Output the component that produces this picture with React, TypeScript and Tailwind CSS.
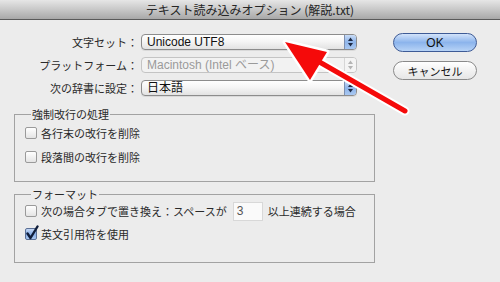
const jp = "font-['Noto_Sans_CJK_JP','Noto_Sans',sans-serif]";
const latin = "font-['Liberation_Sans','Noto_Sans_CJK_JP',sans-serif]";

function Stepper({ active }: { active: boolean }) {
  const c = active ? "#1d2a44" : "#b4b4b4";
  return (
    <svg width="7" height="10" viewBox="0 0 7 10">
      <path d="M3.5 0.5 L6 4 L1 4 Z" fill={c} />
      <path d="M3.5 9.5 L6 6 L1 6 Z" fill={c} />
    </svg>
  );
}

function Popup({ label, value, disabled = false }: { label: string; value: string; disabled?: boolean }) {
  return (
    <div className="flex h-[23px] items-center">
      <div className={`w-[138px] text-right text-[11px] leading-[14px] text-[#2a2a2a] ${jp}`}>{label}</div>
      <div
        className={`ml-[3px] flex h-[16px] w-[216px] items-stretch overflow-hidden rounded-[4px] border ${
          disabled ? "border-[#c4c4c4] bg-[#f2f2f2]" : "border-[#8c8c8c] bg-gradient-to-b from-[#ffffff] via-[#f4f4f4] to-[#e2e2e2] shadow-[0_1px_0_rgba(0,0,0,0.08)]"
        }`}
      >
        <div
          className={`flex flex-1 items-center pl-[5px] text-[12px] leading-[14px] ${latin} ${
            disabled ? "text-[#9a9a9a]" : "text-[#111]"
          }`}
        >
          {value}
        </div>
        <div
          className={`flex w-[12px] items-center justify-center border-l ${
            disabled ? "border-[#d6d6d6] bg-[#f4f4f4]" : "border-[#7d8fb0] bg-gradient-to-b from-[#c9dcf6] via-[#8fb5ea] to-[#a9c8f2]"
          }`}
        >
          <Stepper active={!disabled} />
        </div>
      </div>
    </div>
  );
}

function Checkbox({ checked = false }: { checked?: boolean }) {
  return (
    <div className="relative h-[12px] w-[12px] shrink-0">
      <div
        className={`h-[12px] w-[12px] rounded-[2px] border ${
          checked
            ? "border-[#5a6f95] bg-gradient-to-b from-[#c6d9f5] via-[#88aee6] to-[#a8c6f0]"
            : "border-[#9a9a9a] bg-gradient-to-b from-[#ffffff] to-[#e4e4e4]"
        }`}
      />
      {checked && (
        <svg className="absolute left-[1px] top-[-3px]" width="13" height="15" viewBox="0 0 13 15">
          <path d="M1.5 8.5 L4.5 13 L11.5 1.5" fill="none" stroke="#0f1d3a" strokeWidth="2.4" strokeLinecap="round" strokeLinejoin="round" />
        </svg>
      )}
    </div>
  );
}

function Row({ text, checked = false }: { text: string; checked?: boolean }) {
  return (
    <div className="flex h-[14px] items-center">
      <Checkbox checked={checked} />
      <span className={`ml-[4px] text-[11px] leading-[14px] text-[#2a2a2a] ${jp}`}>{text}</span>
    </div>
  );
}

export default function App() {
  return (
    <div className="relative h-[282px] w-[500px] overflow-hidden bg-[#ececec]">
      <div
        className={`flex h-[20px] items-center justify-center border-b border-[#5a5a5a] bg-gradient-to-b from-[#e6e6e6] via-[#c8c8c8] to-[#a8a8a8] text-[12px] leading-[14px] text-[#262626] ${jp}`}
      >
        テキスト読み込みオプション (解説.txt)
      </div>

      <div className="flex pt-[10px]">
        <div className="flex flex-col">
          <Popup label="文字セット：" value="Unicode UTF8" />
          <Popup label="プラットフォーム：" value="Macintosh (Intel ベース)" disabled />
          <Popup label="次の辞書に設定：" value="日本語" />
        </div>
        <div className="ml-[36px] mt-[3px] flex flex-col gap-[9px]">
          <button
            className={`h-[19px] w-[84px] rounded-full border border-[#3e5b96] bg-gradient-to-b from-[#d3e3fa] via-[#8cb4ec] to-[#b7d3f6] text-[12px] leading-[14px] text-[#111] ${latin}`}
          >
            OK
          </button>
          <button
            className={`h-[19px] w-[84px] rounded-full border border-[#8a8a8a] bg-gradient-to-b from-[#ffffff] via-[#f2f2f2] to-[#e6e6e6] text-[11px] leading-[14px] text-[#111] ${jp}`}
          >
            キャンセル
          </button>
        </div>
      </div>

      <fieldset className="ml-[14px] mt-[8px] w-[361px] border border-[#a2a2a2] pb-[17px] pl-[10px]">
        <legend className={`ml-[6px] px-[1px] text-[11px] leading-[14px] text-[#2a2a2a] ${jp}`}>強制改行の処理</legend>
        <div className="flex flex-col gap-[10px] pt-[5px]">
          <Row text="各行末の改行を削除" />
          <Row text="段落間の改行を削除" />
        </div>
      </fieldset>

      <fieldset className="ml-[14px] mt-[5px] w-[361px] border border-[#a2a2a2] pb-[21px] pl-[10px]">
        <legend className={`ml-[6px] px-[1px] text-[11px] leading-[14px] text-[#2a2a2a] ${jp}`}>フォーマット</legend>
        <div className="flex h-[20px] items-center">
          <Checkbox />
          <span className={`ml-[4px] text-[11px] leading-[14px] text-[#2a2a2a] ${jp}`}>次の場合タブで置き換え：スペースが</span>
          <div
            className={`ml-[6px] flex h-[19px] w-[30px] items-center border border-[#d8d8d8] bg-[#fafafa] pl-[3px] text-[12px] text-[#555] ${latin}`}
          >
            3
          </div>
          <span className={`ml-[5px] text-[11px] leading-[14px] text-[#2a2a2a] ${jp}`}>以上連続する場合</span>
        </div>
        <div className="mt-[6px]">
          <Row text="英文引用符を使用" checked />
        </div>
      </fieldset>

      <svg className="pointer-events-none absolute left-0 top-0" width="500" height="282" viewBox="0 0 500 282">
        <g strokeLinejoin="round" strokeLinecap="round">
          <line x1="405" y1="111" x2="316" y2="60" stroke="#ffffff" strokeWidth="9" />
          <polygon points="285,42 327,52 310,80" fill="#ffffff" stroke="#ffffff" strokeWidth="5" />
          <line x1="405" y1="111" x2="316" y2="60" stroke="#f50a0a" strokeWidth="5" />
          <polygon points="285,42 327,52 310,80" fill="#f50a0a" />
        </g>
      </svg>
    </div>
  );
}
